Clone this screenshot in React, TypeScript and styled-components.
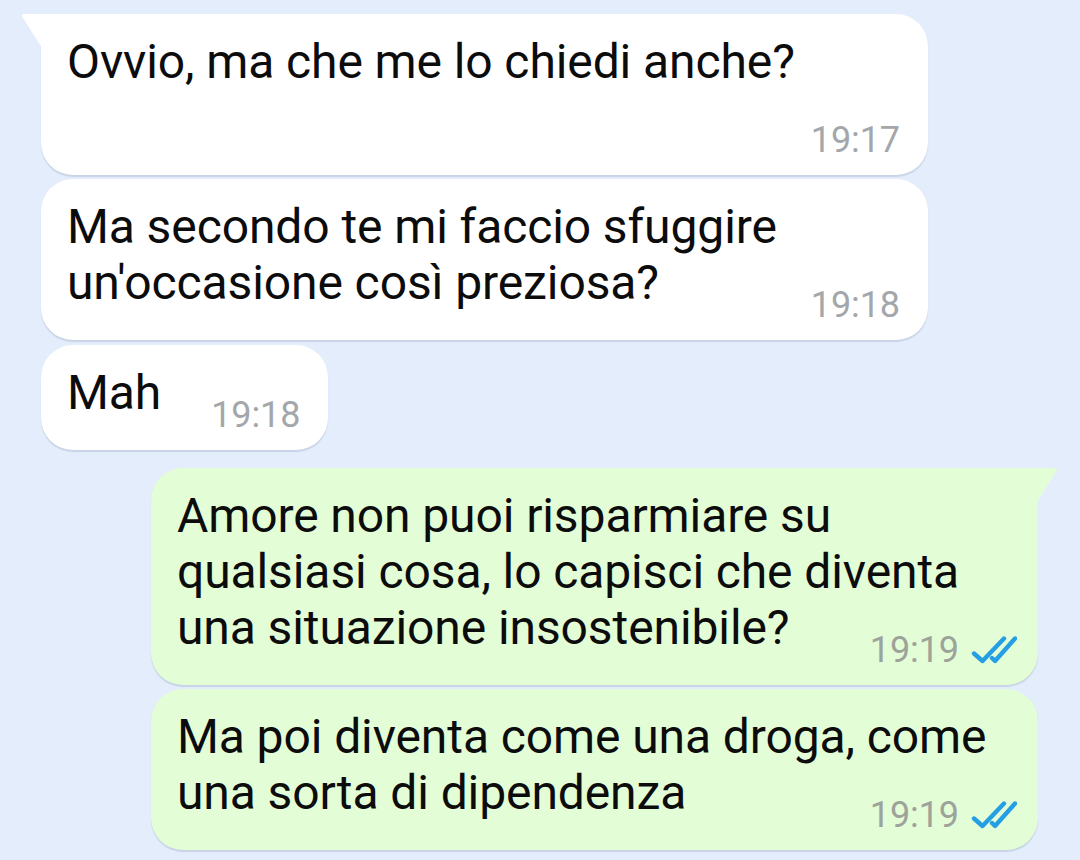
import styled, { createGlobalStyle } from 'styled-components';

const GlobalStyle = createGlobalStyle`
  html, body {
    margin: 0;
    padding: 0;
    background: #e3edfc;
  }
  body {
    font-family: Roboto, 'Noto Sans', 'Liberation Sans', sans-serif;
    width: 1080px;
    height: 860px;
    overflow: hidden;
  }
`;

const Chat = styled.div`
  display: flex;
  flex-direction: column;
  padding: 14px 42px 0 41px;
  background: #e3edfc;
  height: 860px;
  box-sizing: border-box;
`;

const Bubble = styled.div<{ $out?: boolean; $tail?: boolean; $gap: number }>`
  position: relative;
  display: flow-root;
  align-self: ${(p) => (p.$out ? 'flex-end' : 'flex-start')};
  max-width: 887px;
  box-sizing: border-box;
  margin-top: ${(p) => p.$gap}px;
  padding: 20px ${(p) => (p.$out ? 21 : 28)}px 15px 26px;
  background: ${(p) => (p.$out ? '#e3fdd6' : '#ffffff')};
  border-radius: 32px;
  ${(p) => p.$tail && (p.$out ? 'border-top-right-radius: 0;' : 'border-top-left-radius: 0;')}
  box-shadow: 0 1.5px 1px rgba(60, 80, 110, 0.16);
  color: #0c0c0c;
  font-size: 48px;
  line-height: 56px;
  letter-spacing: -0.1px;
`;

const Tail = styled.svg<{ $out?: boolean }>`
  position: absolute;
  top: 0;
  width: 22px;
  height: 34px;
  ${(p) => (p.$out ? 'right: -21px;' : 'left: -21px;')}
`;

const Meta = styled.span<{ $out?: boolean }>`
  float: right;
  display: flex;
  align-items: center;
  gap: 12px;
  margin: 30px 0 0 ${(p) => (p.$out ? 56 : 50)}px;
  font-size: 36px;
  line-height: 40px;
  color: ${(p) => (p.$out ? '#9da39a' : '#a3a7ab')};
`;

const TickIcon = styled.svg`
  flex: none;
  width: 46px;
  height: 28px;
`;

const Ticks = () => (
  <TickIcon viewBox="0 0 46 28" fill="none">
    <g stroke="#259fe4" strokeWidth="4.4" strokeLinecap="round" strokeLinejoin="round">
      <path d="M3 17.5 L11.5 25 L33 2.5" />
      <path d="M21 22 L24 25 L44 2.5" />
    </g>
  </TickIcon>
);

type Msg = { text: string; time: string; out?: boolean; tail?: boolean; gap: number };

const messages: Msg[] = [
  { text: 'Ovvio, ma che me lo chiedi anche?', time: '19:17', tail: true, gap: 0 },
  { text: "Ma secondo te mi faccio sfuggire un'occasione così preziosa?", time: '19:18', gap: 4 },
  { text: 'Mah', time: '19:18', gap: 5 },
  {
    text: 'Amore non puoi risparmiare su qualsiasi cosa, lo capisci che diventa una situazione insostenibile?',
    time: '19:19',
    out: true,
    tail: true,
    gap: 18,
  },
  { text: 'Ma poi diventa come una droga, come una sorta di dipendenza', time: '19:19', out: true, gap: 4 },
];

const App = () => {
  return (
    <>
      <GlobalStyle />
      <Chat>
        {messages.map((m, i) => (
          <Bubble key={i} $out={m.out} $tail={m.tail} $gap={m.gap}>
            {m.tail && (
              <Tail $out={m.out} viewBox="0 0 22 34">
                {m.out ? (
                  <path d="M0 0 L17 0 Q22 0 19 4 L0 34 Z" fill="#e3fdd6" />
                ) : (
                  <path d="M22 0 L5 0 Q0 0 3 4 L22 34 Z" fill="#ffffff" />
                )}
              </Tail>
            )}
            {m.text}
            <Meta $out={m.out}>
              <span>{m.time}</span>
              {m.out && <Ticks />}
            </Meta>
          </Bubble>
        ))}
      </Chat>
    </>
  );
};

export default App;
